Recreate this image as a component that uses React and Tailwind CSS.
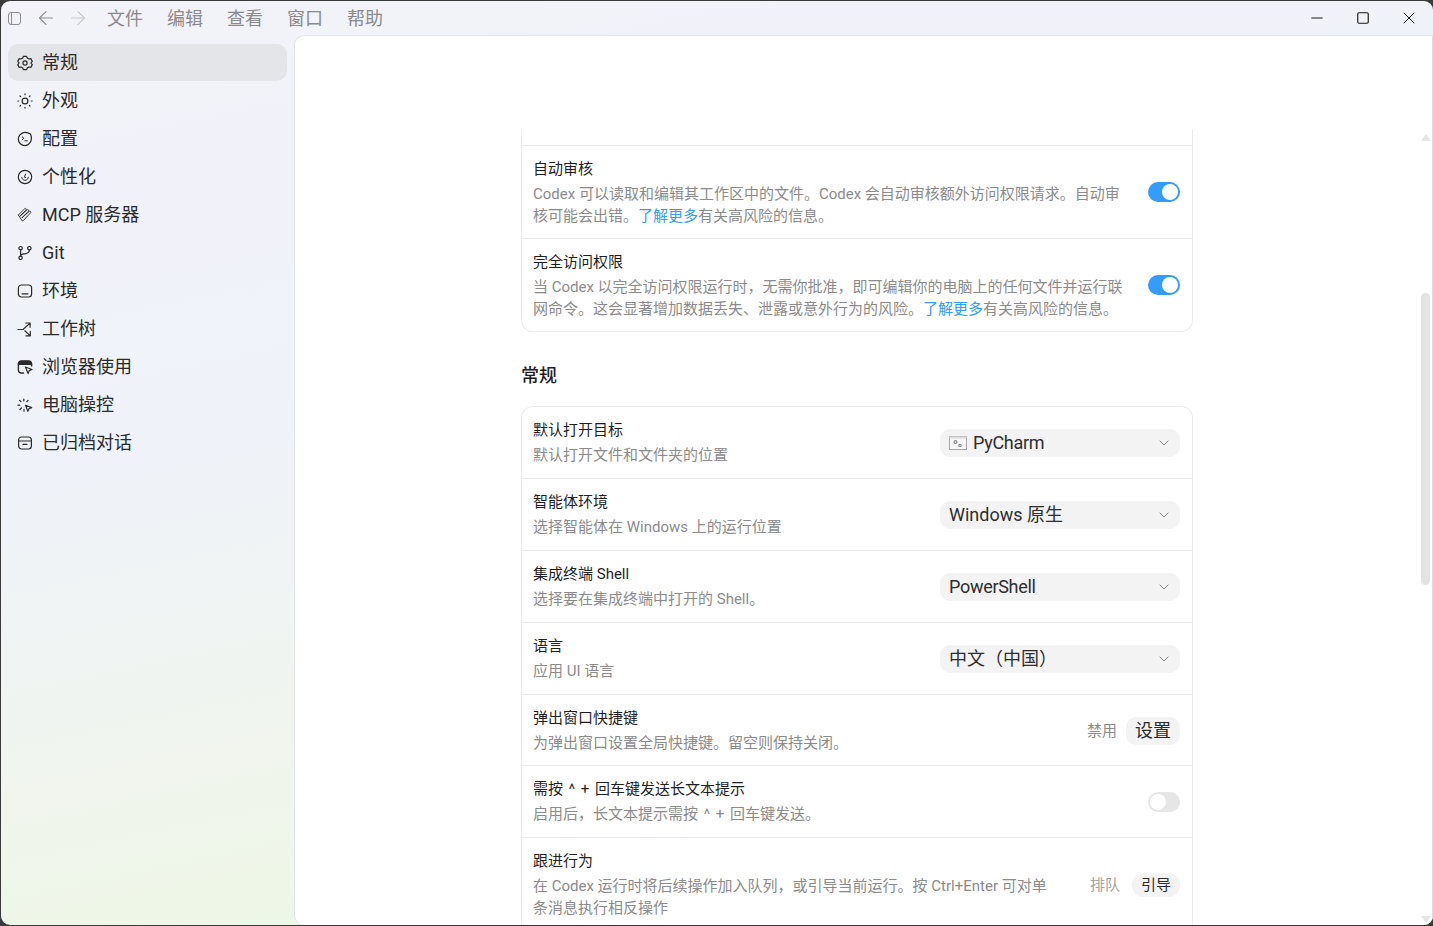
import { ArrowLeft, ArrowRight, ChevronDown, Minus, Square, X } from 'lucide-react';

const stroke = { fill: 'none', stroke: 'currentColor', strokeWidth: 1.2, strokeLinecap: 'round', strokeLinejoin: 'round' };

function Icon({ children }) {
  return (
    <svg viewBox="0 0 16 16" className="w-4 h-4 shrink-0 text-[#2b2b2b]" {...stroke}>
      {children}
    </svg>
  );
}

const navItems = [
  {
    label: '常规',
    active: true,
    icon: (
      <>
        <path d="M6.400 1.400h3.200l.7 1.700 1.800.9 1.700-.4 1.500 2.800-1.200 1.300v.6l1.200 1.300-1.500 2.800-1.700-.4-1.800.9-.7 1.700H6.400l-.7-1.700-1.800-.9-1.700.4L.7 9.600l1.200-1.300v-.6L.7 6.400l1.500-2.800 1.700.4 1.800-.9z" />
        <circle cx="8" cy="8" r="2.100" />
      </>
    ),
  },
  {
    label: '外观',
    icon: (
      <>
        <circle cx="8" cy="8" r="2.900" />
        <path d="M8 .9v.8M8 14.300v.8M.9 8h.8M14.300 8h.8M3 3l.6.6M12.400 12.400l.6.6M3 13l.6-.6M12.400 3.600l.6-.6" />
      </>
    ),
  },
  {
    label: '配置',
    icon: (
      <>
        <path d="M8 1.300c1.500 0 3.400.5 5.500 1.700 1.100 2.700 1.300 5.900-.2 8.300C12.100 13.300 10 14.700 8 14.700c-3.700 0-6.700-3-6.700-6.700 0-2 .8-3.400 2-4.500C4.700 2.300 6.500 1.300 8 1.300z" />
        <path d="M5.200 5.800 6.900 7.300 5.200 8.800M7.800 9.800h2.500" strokeWidth="1" />
      </>
    ),
  },
  {
    label: '个性化',
    icon: (
      <>
        <circle cx="8" cy="8" r="6.700" />
        <path d="M4.700 8.300c.3 1.700 1.600 3 3.300 3 1.800 0 3.200-1.400 3.300-3.100M8.500 5.100 7.400 8.200l1.300.3" strokeWidth="1" />
      </>
    ),
  },
  {
    label: 'MCP 服务器',
    icon: (
      <>
        <path d="M1.400 8 7.600 1.800c1-1 2.300.4 1.300 1.400L3.400 8.800M3.400 8.800 10 2.900c1-.9 2.300.5 1.400 1.400L5.200 10.600M5.200 10.600l6.900-6.100c1-.9 2.400.5 1.400 1.400l-5.900 6.300M7.600 12.200c-.8.900-1.300 1.700-2.400 1.700L1.400 8" strokeWidth="0.95" />
      </>
    ),
  },
  {
    label: 'Git',
    icon: (
      <>
        <circle cx="3.600" cy="3.200" r="1.700" />
        <circle cx="12.400" cy="3.200" r="1.700" />
        <circle cx="3.600" cy="12.800" r="1.700" />
        <path d="M3.600 4.900v6.200M12.400 4.900c0 3-3.300 3.700-5.200 3.900-2.200.2-3.600 1-3.600 2.300" />
      </>
    ),
  },
  {
    label: '环境',
    icon: (
      <>
        <rect x="1.400" y="2" width="13.200" height="12" rx="3" />
        <path d="M5 10.800h6" />
      </>
    ),
  },
  {
    label: '工作树',
    icon: (
      <>
        <path d="M1 8.500h5L12.800 2.400M8.800 2h4.300v4.200M7.800 9.800l5.200 4.800M13.300 10.400v4.400H8.900" />
      </>
    ),
  },
  {
    label: '浏览器使用',
    icon: (
      <>
        <path d="M6.500 14H4.200a2.800 2.800 0 0 1-2.800-2.800V5h13.200v2" strokeWidth="1.400" />
        <path d="M1.400 5.500V4.600a2.800 2.800 0 0 1 2.800-2.800h7.600a2.800 2.800 0 0 1 2.800 2.800v.9z" fill="currentColor" />
        <path d="m8.400 8 6.600 2.500-2.800 1.100-1.100 3z" />
      </>
    ),
  },
  {
    label: '电脑操控',
    icon: (
      <>
        <path d="m8.500 8.200 6.200 2.400-2.700 1-1.100 2.800z" />
        <path d="M6.800 2v2M2.600 3.400l1.300 1.300M11 3.400 9.800 4.600M.9 8.200h1.900M4.400 11l-1.500 1.500M7 12.400v1.800" />
      </>
    ),
  },
  {
    label: '已归档对话',
    icon: (
      <>
        <rect x="1.600" y="2" width="12.800" height="12" rx="3" />
        <path d="M1.600 6h12.800M6 9.400h4" />
      </>
    ),
  },
];

function Toggle({ on }) {
  return (
    <div className={`w-8 h-5 rounded-full flex items-center p-0.5 shrink-0 ${on ? 'bg-[#339cff] justify-end' : 'bg-[#e6e6e6] justify-start'}`}>
      <div className="w-4 h-4 rounded-full bg-white" />
    </div>
  );
}

function Select({ children }) {
  return (
    <div className="w-[240px] h-7 rounded-[10px] bg-[#f3f3f3] flex items-center pl-[9px] pr-2 text-[18px] leading-7 text-[#2e2e2e] shrink-0">
      <div className="flex-1 flex items-center gap-[6px]">{children}</div>
      <ChevronDown className="w-4 h-4 text-[#777777]" strokeWidth={1.4} />
    </div>
  );
}

function Row({ title, desc, control, first, tight }) {
  return (
    <div className={`flex items-center justify-between pl-[11px] pr-3 pt-3 ${tight ? 'pb-[11px]' : 'pb-3'} ${first ? '' : 'border-t border-[#ececec]'}`}>
      <div>
        <div className="text-[15px] leading-[22px] text-[#1f1f1f]">{title}</div>
        <div className="text-[15px] leading-[22px] mt-[3px] text-[#8b8b8b] whitespace-pre-line">{desc}</div>
      </div>
      {control}
    </div>
  );
}

function Link({ children }) {
  return <span className="text-[#339cff]">{children}</span>;
}

function Keys() {
  return <span className="[word-spacing:2px]"> ^ + </span>;
}

function PyCharmIcon() {
  return (
    <svg viewBox="0 0 18 14" className="w-[18px] h-[14px] shrink-0">
      <rect x="0.500" y="0.500" width="17" height="13" fill="#f7f7f7" stroke="#a8a8a8" />
      <rect x="0.500" y="0.500" width="17" height="2" fill="#dcdcdc" />
      <circle cx="6.500" cy="6" r="2" fill="#8f8f8f" />
      <circle cx="11" cy="9.500" r="1.800" fill="#8f8f8f" />
      <circle cx="6.500" cy="6" r="0.700" fill="#f7f7f7" />
      <circle cx="11" cy="9.500" r="0.600" fill="#f7f7f7" />
    </svg>
  );
}

export default function App() {
  return (
    <div className="w-[1433px] h-[926px] overflow-hidden bg-[#3a3a3a] pt-px pl-px pb-px font-['Roboto','Noto_Sans_CJK_SC',sans-serif]">
      <div className="relative h-full rounded-[9px] overflow-hidden flex flex-col bg-[linear-gradient(168deg,#f3f2f9_0%,#eff3f9_40%,#f1f5ee_65%,#ebf8e2_88%,#ebf8e2_100%)]">
        {/* title bar */}
        <div className="h-[34px] shrink-0 flex items-center">
          <div className="w-5 flex justify-end">
            <div className="w-[13px] h-[13px] rounded-[3px] border border-[#8d8d8d] flex">
              <div className="w-[3px] border-r border-[#8d8d8d]" />
            </div>
          </div>
          <ArrowLeft className="w-[22px] h-[22px] ml-[14px] text-[#8d8d8d]" strokeWidth={1.3} />
          <ArrowRight className="w-[22px] h-[22px] ml-[10px] text-[#c9c9c9]" strokeWidth={1.3} />
          <div className="flex gap-6 ml-[18px] mt-[2px] text-[18px] leading-[26px] text-[#8a8a8a]">
            <span>文件</span>
            <span>编辑</span>
            <span>查看</span>
            <span>窗口</span>
            <span>帮助</span>
          </div>
          <div className="ml-auto flex text-[#1a1a1a] pr-px">
            <div className="w-[46px] h-[34px] flex items-center justify-center">
              <Minus className="w-[18px] h-[18px]" strokeWidth={1.5} />
            </div>
            <div className="w-[46px] h-[34px] flex items-center justify-center">
              <Square className="w-[14px] h-[14px]" strokeWidth={2} />
            </div>
            <div className="w-[46px] h-[34px] flex items-center justify-center">
              <X className="w-5 h-5" strokeWidth={1.2} />
            </div>
          </div>
        </div>

        <div className="flex-1 min-h-0 flex">
          {/* sidebar */}
          <div className="w-[293px] shrink-0 pt-[9px] pl-[7px] pr-[7px] flex flex-col gap-px">
            {navItems.map((item) => (
              <div
                key={item.label}
                className={`h-[37px] rounded-[10px] flex items-center gap-[9px] pl-[9px] text-[18px] leading-[26px] text-[#2b2b2b] ${item.active ? 'bg-[#e4e5e9]' : ''}`}
              >
                <Icon>{item.icon}</Icon>
                <span>{item.label}</span>
              </div>
            ))}
          </div>

          {/* main panel */}
          <div className="relative flex-1 min-w-0 bg-white rounded-l-[10px] border-t border-l border-r border-t-[#e1e4ea] border-l-[#e1e4ea] border-r-[#dddddd] overflow-hidden pt-[93px] pl-[226px]">
            <div className="w-[672px]">
              <div className="rounded-b-[12px] border-x border-b border-[#ececec]">
                <div className="h-4" />
                <div className="border-t border-[#ececec] flex items-center justify-between pl-[11px] pr-3 py-[11px]">
                  <div className="pt-px">
                    <div className="text-[15px] leading-[22px] text-[#1f1f1f]">自动审核</div>
                    <div className="text-[15px] leading-[22px] mt-[3px] text-[#8b8b8b]">
                      Codex 可以读取和编辑其工作区中的文件。Codex 会自动审核额外访问权限请求。自动审
                      <br />
                      核可能会出错。<Link>了解更多</Link>有关高风险的信息。
                    </div>
                  </div>
                  <Toggle on />
                </div>
                <div className="border-t border-[#ececec] flex items-center justify-between pl-[11px] pr-3 py-[11px]">
                  <div className="pt-px">
                    <div className="text-[15px] leading-[22px] text-[#1f1f1f]">完全访问权限</div>
                    <div className="text-[15px] leading-[22px] mt-[3px] text-[#8b8b8b]">
                      当 Codex 以完全访问权限运行时，无需你批准，即可编辑你的电脑上的任何文件并运行联
                      <br />
                      网命令。这会显著增加数据丢失、泄露或意外行为的风险。<Link>了解更多</Link>有关高风险的信息。
                    </div>
                  </div>
                  <Toggle on />
                </div>
              </div>

              <div className="mt-[30px] mb-4 text-[18px] leading-[28px] font-medium text-[#1f1f1f]">常规</div>

              <div className="rounded-t-[12px] border-x border-t border-[#ececec]">
                <Row
                  first
                  title="默认打开目标"
                  desc="默认打开文件和文件夹的位置"
                  control={
                    <Select>
                      <PyCharmIcon />
                      <span className="tracking-[-0.3px]">PyCharm</span>
                    </Select>
                  }
                />
                <Row title="智能体环境" desc="选择智能体在 Windows 上的运行位置" control={<Select>Windows 原生</Select>} />
                <Row title="集成终端 Shell" desc="选择要在集成终端中打开的 Shell。" control={<Select><span className="tracking-[-0.3px]">PowerShell</span></Select>} />
                <Row title="语言" desc="应用 UI 语言" control={<Select>中文（中国）</Select>} />
                <Row
                  tight
                  title="弹出窗口快捷键"
                  desc="为弹出窗口设置全局快捷键。留空则保持关闭。"
                  control={
                    <div className="flex items-center gap-[9px]">
                      <span className="text-[15px] leading-5 text-[#8b8b8b]">禁用</span>
                      <div className="w-[54px] h-7 rounded-[10px] bg-[#f3f3f3] flex items-center justify-center text-[18px] leading-6 text-[#2b2b2b]">设置</div>
                    </div>
                  }
                />
                <Row
                  title={<>需按<Keys />回车键发送长文本提示</>}
                  desc={<>启用后，长文本提示需按<Keys />回车键发送。</>}
                  control={<Toggle />}
                />
                <Row
                  title="跟进行为"
                  desc={'在 Codex 运行时将后续操作加入队列，或引导当前运行。按 Ctrl+Enter 可对单\n条消息执行相反操作'}
                  control={
                    <div className="flex items-center gap-3">
                      <span className="text-[15px] leading-5 text-[#a3a3a3]">排队</span>
                      <div className="w-12 h-6 rounded-full bg-[#f3f3f3] flex items-center justify-center text-[15px] leading-5 text-[#2b2b2b]">引导</div>
                    </div>
                  }
                />
              </div>
            </div>

            {/* scrollbar */}
            <div className="absolute top-[98px] right-px w-0 h-0 border-x-[5px] border-x-transparent border-b-[7px] border-b-[#e6e6e6]" />
            <div className="absolute top-[257px] right-[2px] w-[9px] h-[292px] rounded-full bg-[#e3e3e3]" />
            <div className="absolute bottom-[2px] right-px w-0 h-0 border-x-[5px] border-x-transparent border-t-[7px] border-t-[#e6e6e6]" />
          </div>
        </div>
      </div>
    </div>
  );
}
